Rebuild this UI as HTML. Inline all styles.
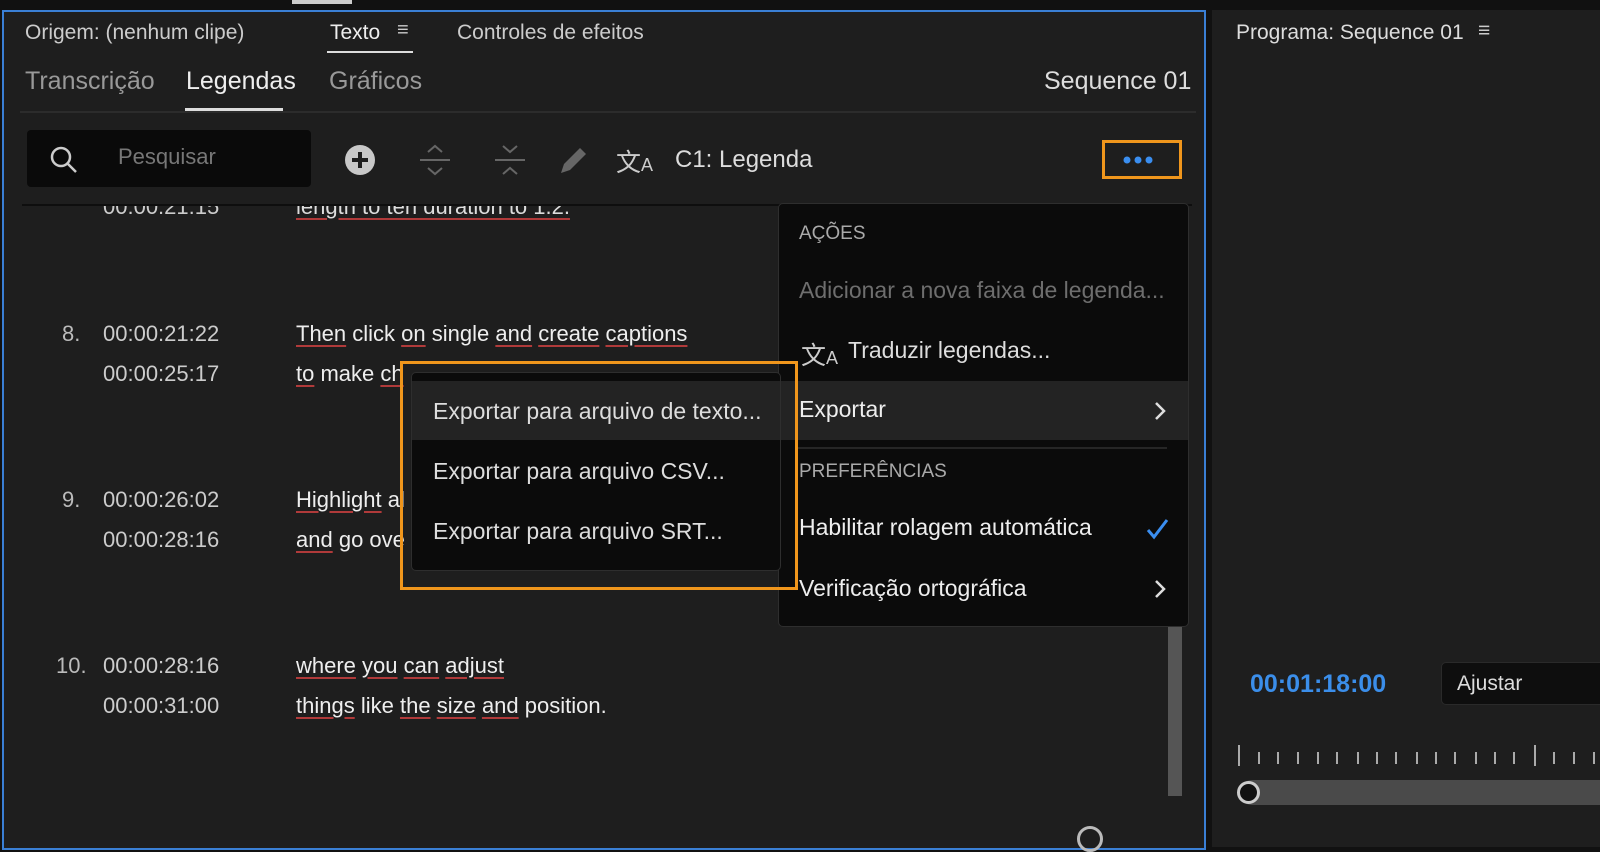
<!DOCTYPE html>
<html><head><meta charset="utf-8"><style>
*{margin:0;padding:0;box-sizing:border-box}
body{width:1600px;height:847px;background:#111;position:relative;overflow:hidden;font-family:"Liberation Sans Narrow","Liberation Sans",sans-serif;color:#ddd}
.a{position:absolute;white-space:nowrap}
.u{text-decoration:underline;text-decoration-color:#b03a3a;text-underline-offset:4px}
</style></head><body>
<div class="a" style="left:292px;top:0;width:60px;height:4px;background:#ccc"></div>
<div class="a" style="left:2px;top:10px;width:1204px;height:840px;background:#1e1e1e;border:2px solid #3a7fd5"></div>
<div class="a" style="left:1212px;top:10px;width:388px;height:837px;background:#1e1e1e"></div>

<div class="a" style="left:25px;top:21px;font-size:21px;color:#ccc">Origem: (nenhum clipe)</div>
<div class="a" style="left:330px;top:21px;font-size:21px;color:#eee">Texto</div>
<div class="a" style="left:397px;top:19px;font-size:20px;color:#ccc">≡</div>
<div class="a" style="left:327px;top:51px;width:86px;height:2px;background:#ddd"></div>
<div class="a" style="left:457px;top:21px;font-size:21px;color:#ccc">Controles de efeitos</div>

<div class="a" style="left:25px;top:67px;font-size:25px;color:#999">Transcrição</div>
<div class="a" style="left:186px;top:67px;font-size:25px;color:#eee">Legendas</div>
<div class="a" style="left:185px;top:108px;width:98px;height:3px;background:#ddd"></div>
<div class="a" style="left:329px;top:67px;font-size:25px;color:#999">Gráficos</div>
<div class="a" style="left:1044px;top:67px;font-size:25px;color:#ddd">Sequence 01</div>
<div class="a" style="left:20px;top:111px;width:1176px;height:2px;background:#2c2c2c"></div>

<div class="a" style="left:27px;top:130px;width:284px;height:57px;background:#0a0a0a;border-radius:4px"></div>
<svg class="a" style="left:48px;top:144px" width="32" height="32"><circle cx="13" cy="13" r="9" stroke="#ccc" stroke-width="2.5" fill="none"/><line x1="20" y1="20" x2="28" y2="28" stroke="#ccc" stroke-width="2.5"/></svg>
<div class="a" style="left:118px;top:144px;font-size:22px;color:#777">Pesquisar</div>
<svg class="a" style="left:343px;top:143px" width="34" height="34"><circle cx="17" cy="17" r="15" fill="#c8c8c8"/><path d="M17 9v16M9 17h16" stroke="#1e1e1e" stroke-width="4"/></svg>
<svg class="a" style="left:418px;top:142px" width="34" height="36" stroke="#666" stroke-width="2" fill="none"><path d="M10 10l7-6 7 6M2 18h30M10 26l7 6 7-6"/></svg>
<svg class="a" style="left:493px;top:142px" width="34" height="36" stroke="#666" stroke-width="2" fill="none"><path d="M10 4l7 6 7-6M2 18h30M10 32l7-6 7 6"/></svg>
<svg class="a" style="left:555px;top:143px" width="34" height="34"><path d="M6 30l3-9 16-16 6 6-16 16z" fill="#666"/></svg>
<div class="a" style="left:616px;top:143px;font-size:25px;color:#ccc">文<span style="font-size:18px">A</span></div>
<div class="a" style="left:675px;top:146px;font-size:24px;color:#ddd">C1: Legenda</div>
<div class="a" style="left:1102px;top:140px;width:80px;height:39px;border:3px solid #f0961c"></div>
<svg class="a" style="left:1122px;top:155px" width="36" height="10" fill="#3a8ef0"><circle cx="5" cy="5" r="3.5"/><circle cx="16" cy="5" r="3.5"/><circle cx="27" cy="5" r="3.5"/></svg>

<div class="a" style="left:22px;top:204px;width:1170px;height:2px;background:#0e0e0e"></div>
<div class="a" style="left:24px;top:206px;width:1150px;height:16px;overflow:hidden">
<div class="a" style="left:79px;top:-12px;font-size:22px;color:#ccc">00:00:21:15</div>
<div class="a u" style="left:272px;top:-12px;font-size:22px;color:#ddd">length to ten duration to 1.2.</div></div>

<div class="a" style="left:62px;top:321px;font-size:22px;color:#bbb">8.</div>
<div class="a" style="left:103px;top:321px;font-size:22px;color:#ccc">00:00:21:22</div>
<div class="a" style="left:103px;top:361px;font-size:22px;color:#ccc">00:00:25:17</div>
<div class="a" style="left:296px;top:321px;font-size:22px;color:#eee"><span class="u">Then</span> click <span class="u">on</span> single <span class="u">and</span> <span class="u">create</span> <span class="u">captions</span></div>
<div class="a" style="left:296px;top:361px;font-size:22px;color:#eee"><span class="u">to</span> make <span class="u">ch</span></div>

<div class="a" style="left:62px;top:487px;font-size:22px;color:#bbb">9.</div>
<div class="a" style="left:103px;top:487px;font-size:22px;color:#ccc">00:00:26:02</div>
<div class="a" style="left:103px;top:527px;font-size:22px;color:#ccc">00:00:28:16</div>
<div class="a" style="left:296px;top:487px;font-size:22px;color:#eee"><span class="u">Highlight</span> al</div>
<div class="a" style="left:296px;top:527px;font-size:22px;color:#eee"><span class="u">and</span> go ove</div>

<div class="a" style="left:56px;top:653px;font-size:22px;color:#bbb">10.</div>
<div class="a" style="left:103px;top:653px;font-size:22px;color:#ccc">00:00:28:16</div>
<div class="a" style="left:103px;top:693px;font-size:22px;color:#ccc">00:00:31:00</div>
<div class="a" style="left:296px;top:653px;font-size:22px;color:#eee"><span class="u">where</span> <span class="u">you</span> <span class="u">can</span> <span class="u">adjust</span></div>
<div class="a" style="left:296px;top:693px;font-size:22px;color:#eee"><span class="u">things</span> like <span class="u">the</span> <span class="u">size</span> <span class="u">and</span> position.</div>
<div class="a" style="left:1168px;top:620px;width:14px;height:176px;background:#555"></div>
<div class="a" style="left:1077px;top:826px;width:26px;height:26px;border-radius:50%;border:3px solid #bbb"></div>

<div class="a" style="left:778px;top:203px;width:411px;height:424px;background:#0b0b0b;border:1px solid #2e2e2e;border-radius:5px"></div>
<div class="a" style="left:779px;top:381px;width:409px;height:59px;background:#232323"></div>
<div class="a" style="left:795px;top:447px;width:372px;height:2px;background:#262626"></div>
<div class="a" style="left:799px;top:223px;font-size:19px;color:#aaa">AÇÕES</div>
<div class="a" style="left:799px;top:277px;font-size:23px;color:#6e6e6e">Adicionar a nova faixa de legenda...</div>
<div class="a" style="left:801px;top:336px;font-size:25px;color:#ccc">文<span style="font-size:18px">A</span></div>
<div class="a" style="left:848px;top:337px;font-size:23px;color:#ddd">Traduzir legendas...</div>
<div class="a" style="left:799px;top:396px;font-size:23px;color:#eee">Exportar</div>
<svg class="a" style="left:1152px;top:400px" width="16" height="22" stroke="#ddd" stroke-width="2.5" fill="none"><path d="M4 3l8 8-8 8"/></svg>
<div class="a" style="left:799px;top:461px;font-size:19px;color:#aaa">PREFERÊNCIAS</div>
<div class="a" style="left:799px;top:514px;font-size:23px;color:#eee">Habilitar rolagem automática</div>
<svg class="a" style="left:1145px;top:517px" width="26" height="24" stroke="#3a8ef0" stroke-width="3" fill="none"><path d="M3 13l6 7L22 3"/></svg>
<div class="a" style="left:799px;top:575px;font-size:23px;color:#eee">Verificação ortográfica</div>
<svg class="a" style="left:1152px;top:578px" width="16" height="22" stroke="#ddd" stroke-width="2.5" fill="none"><path d="M4 3l8 8-8 8"/></svg>

<div class="a" style="left:411px;top:372px;width:370px;height:199px;background:#0b0b0b;border:1px solid #2e2e2e;border-radius:5px"></div>
<div class="a" style="left:412px;top:381px;width:368px;height:59px;background:#232323"></div>
<div class="a" style="left:433px;top:398px;font-size:23px;color:#ddd">Exportar para arquivo de texto...</div>
<div class="a" style="left:433px;top:458px;font-size:23px;color:#ddd">Exportar para arquivo CSV...</div>
<div class="a" style="left:433px;top:518px;font-size:23px;color:#ddd">Exportar para arquivo SRT...</div>
<div class="a" style="left:400px;top:361px;width:398px;height:229px;border:3px solid #f0961c"></div>

<div class="a" style="left:1236px;top:21px;font-size:21px;color:#ddd">Programa: Sequence 01</div>
<div class="a" style="left:1478px;top:19px;font-size:21px;color:#ccc">≡</div>
<div class="a" style="left:1250px;top:670px;font-size:25px;font-weight:bold;color:#3b8eea;font-family:'Liberation Sans',sans-serif">00:01:18:00</div>
<div class="a" style="left:1441px;top:662px;width:170px;height:43px;background:#0e0e0e;border:1px solid #2a2a2a;border-radius:5px"></div>
<div class="a" style="left:1457px;top:672px;font-size:21px;color:#ddd">Ajustar</div>
<svg class="a" style="left:1235px;top:740px" width="365" height="30" stroke="#aaa" stroke-width="2">
<line x1="4" y1="5" x2="4" y2="26"/><line x1="24" y1="12" x2="24" y2="24"/><line x1="43" y1="12" x2="43" y2="24"/><line x1="63" y1="12" x2="63" y2="24"/><line x1="83" y1="12" x2="83" y2="24"/><line x1="102" y1="12" x2="102" y2="24"/><line x1="123" y1="12" x2="123" y2="24"/><line x1="142" y1="12" x2="142" y2="24"/><line x1="161" y1="12" x2="161" y2="24"/><line x1="182" y1="12" x2="182" y2="24"/><line x1="201" y1="12" x2="201" y2="24"/><line x1="220" y1="12" x2="220" y2="24"/><line x1="241" y1="12" x2="241" y2="24"/><line x1="260" y1="12" x2="260" y2="24"/><line x1="279" y1="12" x2="279" y2="24"/><line x1="300" y1="5" x2="300" y2="26"/><line x1="319" y1="12" x2="319" y2="24"/><line x1="339" y1="12" x2="339" y2="24"/><line x1="359" y1="12" x2="359" y2="24"/></svg>
<div class="a" style="left:1240px;top:780px;width:360px;height:25px;background:#4a4a4a;border-radius:12px 0 0 12px"></div>
<div class="a" style="left:1237px;top:781px;width:23px;height:23px;border-radius:50%;background:#111;border:3px solid #ccc"></div>
</body></html>
